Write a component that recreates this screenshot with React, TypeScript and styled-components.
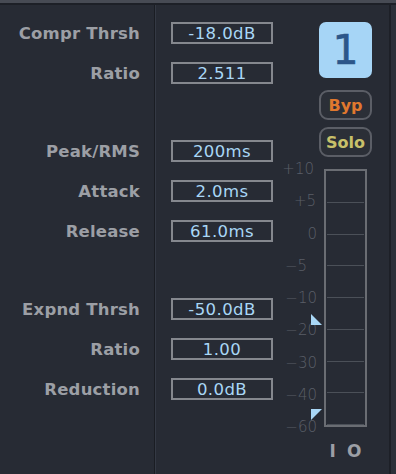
import styled, { createGlobalStyle } from "styled-components";

const GlobalStyle = createGlobalStyle`
  html, body {
    margin: 0;
    padding: 0;
    background: #272b34;
  }
`;

const Panel = styled.div`
  width: 396px;
  height: 474px;
  background: #272b34;
  display: flex;
  flex-direction: column;
  overflow: hidden;
  font-family: "DejaVu Sans", "Liberation Sans", sans-serif;
`;

const TopEdge = styled.div`
  height: 3px;
  background: #474b54;
  border-bottom: 2px solid #1d2027;
`;

const Body = styled.div`
  flex: 1;
  display: flex;
`;

const LabelColumn = styled.div`
  width: 140px;
  padding: 8px 14px 0 0;
  border-right: 1px solid #1a1d23;
  box-shadow: 1px 0 0 #343944;
  display: flex;
  flex-direction: column;
`;

const ValueColumn = styled.div`
  width: 126px;
  margin-left: 1px;
  padding: 8px 0 0 15px;
  box-sizing: border-box;
  display: flex;
  flex-direction: column;
`;

const Row = styled.div<{ $gapAbove?: boolean }>`
  height: 40px;
  display: flex;
  align-items: center;
  justify-content: flex-end;
  margin-top: ${(p) => (p.$gapAbove ? "38px" : "0")};
`;

const Label = styled.span`
  font-size: 16.5px;
  font-weight: bold;
  letter-spacing: 0.2px;
  color: #9c9fa5;
  white-space: nowrap;
`;

const ValueBox = styled.div`
  width: 102px;
  height: 22px;
  box-sizing: border-box;
  border: 2px solid #85888e;
  display: flex;
  align-items: center;
  justify-content: center;
  color: #a9d7f6;
  font-size: 16.5px;
  letter-spacing: 0.4px;
`;

const ValueRow = styled(Row)`
  justify-content: flex-start;
`;

const SideColumn = styled.div`
  width: 107px;
  padding-top: 17px;
  border-right: 2px solid #1d2027;
  display: flex;
  flex-direction: column;
  align-items: flex-start;
`;

const EdgeStrip = styled.div`
  flex: 1;
  background: #2c3039;
`;

const ChannelBox = styled.div`
  width: 53px;
  height: 56px;
  margin-left: 37px;
  border-radius: 7px;
  background: #a6d5f6;
  color: #2c5689;
  font-size: 41px;
  display: flex;
  align-items: center;
  justify-content: center;
  -webkit-text-stroke: 0.6px #2c5689;
`;

const ToggleButton = styled.div<{ $color: string; $top: number }>`
  width: 53px;
  height: 30px;
  margin: ${(p) => p.$top}px 0 0 37px;
  box-sizing: border-box;
  border: 2px solid #5b5e66;
  border-radius: 9px;
  background: #2b2f37;
  color: ${(p) => p.$color};
  font-size: 16px;
  font-weight: bold;
  display: flex;
  align-items: center;
  justify-content: center;
`;

const MeterArea = styled.div`
  display: flex;
  margin-top: 12px;
  align-items: flex-start;
`;

const Scale = styled.div`
  width: 35px;
  margin-top: -16px;
  display: flex;
  flex-direction: column;
  align-items: flex-end;
`;

const ScaleLabel = styled.span<{ $shift: number }>`
  height: 32.25px;
  line-height: 32.25px;
  font-size: 15px;
  font-weight: 200;
  color: #5a5e67;
  padding-right: ${(p) => p.$shift}px;
  white-space: nowrap;
`;

const MeterStack = styled.div`
  margin-left: 7px;
  display: flex;
  flex-direction: column;
  align-items: center;
`;

const MeterFrame = styled.div`
  position: relative;
  width: 43px;
  height: 258px;
  box-sizing: border-box;
  border: 2px solid #6a6d73;
  display: flex;
  flex-direction: column;
`;

const MeterCell = styled.div`
  flex: 1;
  margin: 0 1px;
  border-bottom: 1px solid #4b5058;

  &:last-child {
    border-bottom: none;
  }
`;

const Marker = styled.svg<{ $top: number }>`
  position: absolute;
  left: -15px;
  top: ${(p) => p.$top}px;
`;

const IoLabels = styled.div`
  margin-top: 14px;
  display: flex;
  gap: 11px;
  font-size: 17px;
  font-weight: bold;
  color: #9c9fa5;
`;

const params = [
  { label: "Compr Thrsh", value: "-18.0dB" },
  { label: "Ratio", value: "2.511" },
  { label: "Peak/RMS", value: "200ms", gap: true },
  { label: "Attack", value: "2.0ms" },
  { label: "Release", value: "61.0ms" },
  { label: "Expnd Thrsh", value: "-50.0dB", gap: true },
  { label: "Ratio", value: "1.00" },
  { label: "Reduction", value: "0.0dB" },
];

const ticks = [
  { text: "+10", shift: 3 },
  { text: "+5", shift: 1 },
  { text: "0", shift: 0 },
  { text: "\u22125", shift: 10 },
  { text: "\u221210", shift: 0 },
  { text: "\u221220", shift: 0 },
  { text: "\u221230", shift: 0 },
  { text: "\u221240", shift: 0 },
  { text: "\u221260", shift: 0 },
];

const App = () => {
  return (
    <>
      <GlobalStyle />
      <Panel>
        <TopEdge />
        <Body>
          <LabelColumn>
            {params.map((p, i) => (
              <Row key={i} $gapAbove={p.gap}>
                <Label>{p.label}</Label>
              </Row>
            ))}
          </LabelColumn>
          <ValueColumn>
            {params.map((p, i) => (
              <ValueRow key={i} $gapAbove={p.gap}>
                <ValueBox>{p.value}</ValueBox>
              </ValueRow>
            ))}
          </ValueColumn>
          <SideColumn>
            <ChannelBox>1</ChannelBox>
            <ToggleButton $color="#e0782e" $top={12}>
              Byp
            </ToggleButton>
            <ToggleButton $color="#c8c06a" $top={7}>
              Solo
            </ToggleButton>
            <MeterArea>
              <Scale>
                {ticks.map((t) => (
                  <ScaleLabel key={t.text} $shift={t.shift}>
                    {t.text}
                  </ScaleLabel>
                ))}
              </Scale>
              <MeterStack>
                <MeterFrame>
                  {Array.from({ length: 8 }).map((_, i) => (
                    <MeterCell key={i} />
                  ))}
                  <Marker $top={143} width="11" height="11" viewBox="0 0 11 11">
                    <polygon points="0,0 11,11 0,11" fill="#a9d7f6" />
                  </Marker>
                  <Marker $top={238} width="11" height="11" viewBox="0 0 11 11">
                    <polygon points="0,0 11,0 0,11" fill="#a9d7f6" />
                  </Marker>
                </MeterFrame>
                <IoLabels>
                  <span>I</span>
                  <span>O</span>
                </IoLabels>
              </MeterStack>
            </MeterArea>
          </SideColumn>
          <EdgeStrip />
        </Body>
      </Panel>
    </>
  );
};

export default App;
